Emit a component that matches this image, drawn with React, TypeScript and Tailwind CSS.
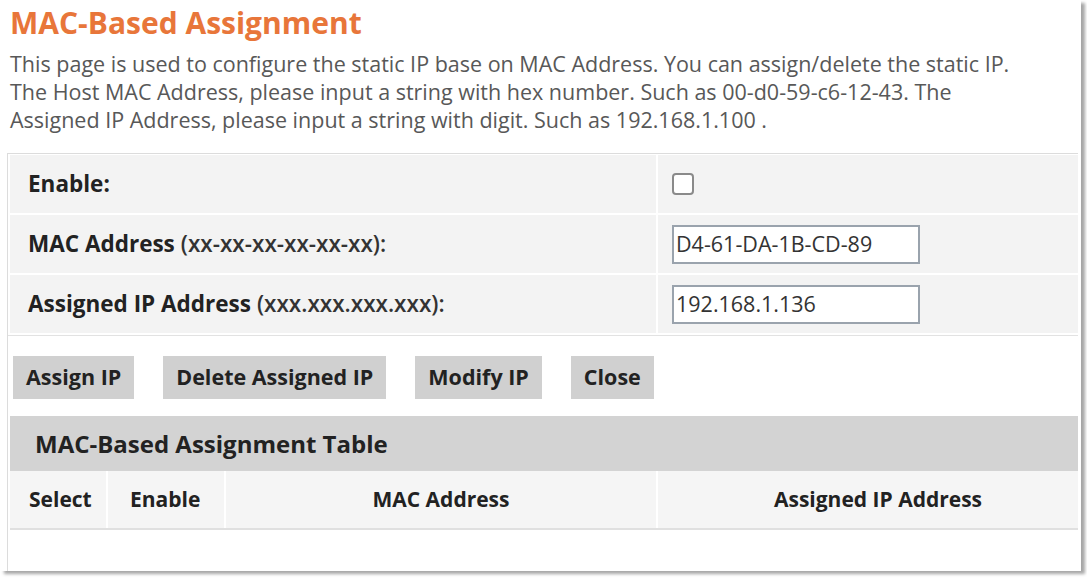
const font = { fontFamily: '"Open Sans", "Noto Sans", sans-serif' };

const rows = [
  { label: 'Enable:', hint: '', kind: 'check' },
  { label: 'MAC Address', hint: '(xx-xx-xx-xx-xx-xx):', kind: 'text', value: 'D4-61-DA-1B-CD-89' },
  { label: 'Assigned IP Address', hint: '(xxx.xxx.xxx.xxx):', kind: 'text', value: '192.168.1.136' },
];

const buttons = ['Assign IP', 'Delete Assigned IP', 'Modify IP', 'Close'];

const App = () => {
  return (
    <div className="w-[1087px] h-[579px] bg-white overflow-hidden" style={font}>
      <div className="w-[1081px] h-[571px] bg-white shadow-[4px_3px_3px_rgba(0,0,0,0.35)] flex flex-col">
        {/* heading + help text */}
        <div className="px-[10px] pt-[5px]">
          <h1 className="text-[30px] leading-[36px] font-bold text-[#e8763a]">MAC-Based Assignment</h1>
          <p className="mt-[9px] text-[21.5px] leading-[28px] text-[#585858] whitespace-nowrap">
            This page is used to configure the static IP base on MAC Address. You can assign/delete the static IP.
            <br />
            The Host MAC Address, please input a string with hex number. Such as 00-d0-59-c6-12-43. The
            <br />
            Assigned IP Address, please input a string with digit. Such as 192.168.1.100 .
          </p>
        </div>

        {/* main box */}
        <div className="mt-[19px] ml-[7px] mr-[3px] flex-1 border-l border-t border-[#dcdcdc] flex flex-col">
          <div className="pt-[1px] pl-[2px] flex flex-col gap-[2px] border-b border-[#e2e2e2] pb-[2px]">
            {rows.map((r) => (
              <div key={r.label} className="flex h-[58px] gap-[2px]">
                <div className="w-[646px] bg-[#f3f3f3] flex items-center pl-[18px] text-[22.5px] text-[#222222]">
                  <span className="font-bold">{r.label}</span>
                  {r.hint && <span className="ml-[6px] font-semibold text-[#333333]">{r.hint}</span>}
                </div>
                <div className="flex-1 bg-[#f3f3f3] flex items-center pl-[14px]">
                  {r.kind === 'check' ? (
                    <span className="w-[22px] h-[22px] rounded-[4px] border-2 border-[#8a8a8a] bg-white" />
                  ) : (
                    <div className="w-[248px] h-[39px] border-2 border-[#9aa3ad] bg-white flex items-center px-[2px] text-[21.5px] text-[#333333]">
                      {r.value}
                    </div>
                  )}
                </div>
              </div>
            ))}
          </div>

          {/* action buttons */}
          <div className="mt-[20px] pl-[5px] flex gap-[29px]">
            {buttons.map((b) => (
              <div key={b} className="h-[43px] px-[13px] bg-[#d0d0d0] flex items-center text-[21.5px] font-bold text-[#222222]">
                {b}
              </div>
            ))}
          </div>

          {/* table */}
          <div className="mt-[17px] ml-[2px]">
            <div className="h-[55px] bg-[#d3d3d3] flex items-center pl-[25px] text-[24px] font-bold text-[#222222]">
              MAC-Based Assignment Table
            </div>
            <div className="h-[59px] flex gap-[2px] border-b-2 border-[#e0e0e0] text-[21px] font-bold text-[#222222]">
              <div className="w-[96px] bg-[#f5f5f5] flex items-center pl-[19px]">Select</div>
              <div className="w-[116px] bg-[#f5f5f5] flex items-center pl-[22px]">Enable</div>
              <div className="w-[430px] bg-[#f5f5f5] flex items-center justify-center">MAC Address</div>
              <div className="flex-1 bg-[#f5f5f5] flex items-center justify-center pl-[20px]">Assigned IP Address</div>
            </div>
          </div>
        </div>
      </div>
    </div>
  );
};

export default App;
